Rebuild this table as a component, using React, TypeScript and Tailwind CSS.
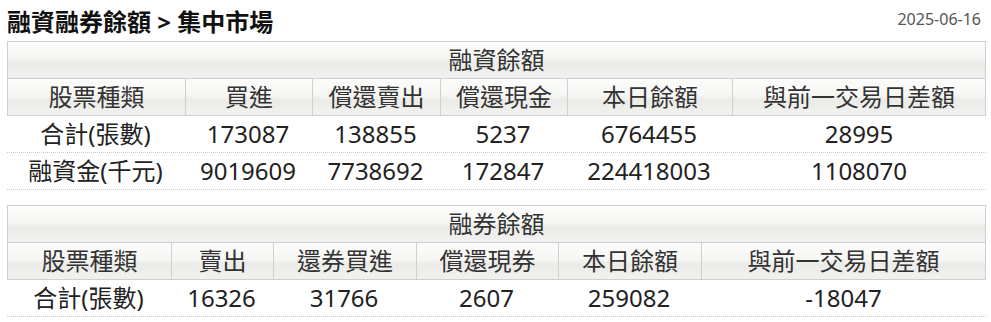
import React from "react";

const hdrBg =
  "bg-[linear-gradient(to_bottom,#fcfcfb_0%,#f6f6f4_45%,#ebebe8_58%,#f1f1ef_100%)]";

type T = {
  title: string;
  cols: string;
  heads: string[];
  rows: string[][];
};

const tables: T[] = [
  {
    title: "融資餘額",
    cols: "grid-cols-[177px_127px_128px_127px_165px_1fr]",
    heads: ["股票種類", "買進", "償還賣出", "償還現金", "本日餘額", "與前一交易日差額"],
    rows: [
      ["合計(張數)", "173087", "138855", "5237", "6764455", "28995"],
      ["融資金(千元)", "9019609", "7738692", "172847", "224418003", "1108070"],
    ],
  },
  {
    title: "融券餘額",
    cols: "grid-cols-[163px_102px_143px_142px_143px_1fr]",
    heads: ["股票種類", "賣出", "還券買進", "償還現券", "本日餘額", "與前一交易日差額"],
    rows: [["合計(張數)", "16326", "31766", "2607", "259082", "-18047"]],
  },
];

function Table({ t }: { t: T }) {
  return (
    <div className="w-[979px]">
      <div
        className={`${hdrBg} h-[38px] border border-[#cfcfcf] flex items-center justify-center text-[#333]`}
      >
        {t.title}
      </div>
      <div className={`grid ${t.cols} ${hdrBg} border-x border-b border-[#cfcfcf]`}>
        {t.heads.map((h, i) => (
          <div
            key={i}
            className={`h-[36px] flex items-center justify-center text-[#333] ${
              i > 0 ? "border-l border-[#cfcfcf]" : ""
            }`}
          >
            {h}
          </div>
        ))}
      </div>
      {t.rows.map((r, ri) => (
        <div
          key={ri}
          className={`grid ${t.cols} border-b border-dotted border-[#c8c8c8]`}
        >
          {r.map((c, i) => (
            <div
              key={i}
              className={`h-[36px] flex items-center justify-center text-[#222] ${
                i > 0 ? "pl-px" : ""
              }`}
            >
              {c}
            </div>
          ))}
        </div>
      ))}
    </div>
  );
}

export default function App() {
  return (
    <div
      className="w-[991px] h-[322px] bg-white pl-[7px] overflow-hidden"
      style={{ fontFamily: '"Noto Sans", "Noto Sans CJK TC", sans-serif' }}
    >
      <div className="h-[41px] flex items-end justify-between pr-[10px] pb-[3px]">
        <div className="text-[24px] font-bold text-[#111] leading-[32px]">
          融資融券餘額 &gt; 集中市場
        </div>
        <div className="text-[16px] text-[#555] leading-[22px] mb-[8px]">2025-06-16</div>
      </div>
      <div className="text-[24px] leading-none flex flex-col gap-[15px]">
        {tables.map((t, i) => (
          <Table key={i} t={t} />
        ))}
      </div>
    </div>
  );
}
